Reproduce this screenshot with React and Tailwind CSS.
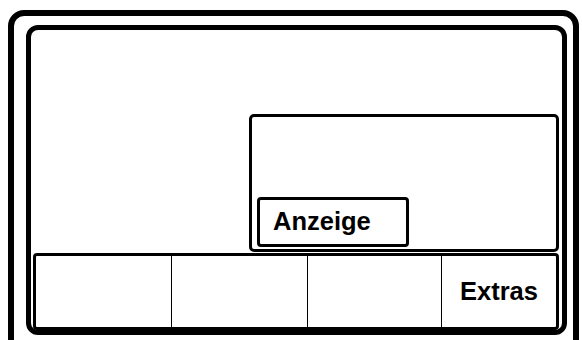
import React from 'react';

const App = () => {
  return (
    <div
      className="w-[582px] h-[340px] overflow-hidden bg-white pt-[10px] pl-[8px]"
      style={{ fontFamily: '"Liberation Sans", Arial, sans-serif' }}
    >
      {/* outer device frame */}
      <div className="w-[571px] h-[350px] border-[6px] border-black rounded-[16px] pl-[12px] pt-[9px]">
        {/* screen */}
        <div className="w-[541px] h-[310px] border-[5px] border-black rounded-[12px] flex flex-col">
          <div className="mt-[84px] self-end mr-[3px] w-[310px] h-[138px] border-[3px] border-black rounded-[5px] flex items-end pl-[5px] pb-[2px]">
            <div className="w-[152px] h-[50px] border-[3px] border-black rounded-[4px] flex items-center pl-[13px]">
              <span className="text-[25.5px] font-bold text-black leading-none">Anzeige</span>
            </div>
          </div>

          <div className="mt-[1px] ml-[2px] w-[526px] h-[77px] border-[3px] border-black rounded-[4px] flex">
            <div className="w-[136px] h-full border-r border-black" />
            <div className="w-[136px] h-full border-r border-black" />
            <div className="w-[134px] h-full border-r border-black" />
            <div className="flex-1 h-full flex items-center justify-center">
              <span className="text-[25.5px] font-bold text-black leading-none">Extras</span>
            </div>
          </div>
        </div>
      </div>
    </div>
  );
};

export default App;
